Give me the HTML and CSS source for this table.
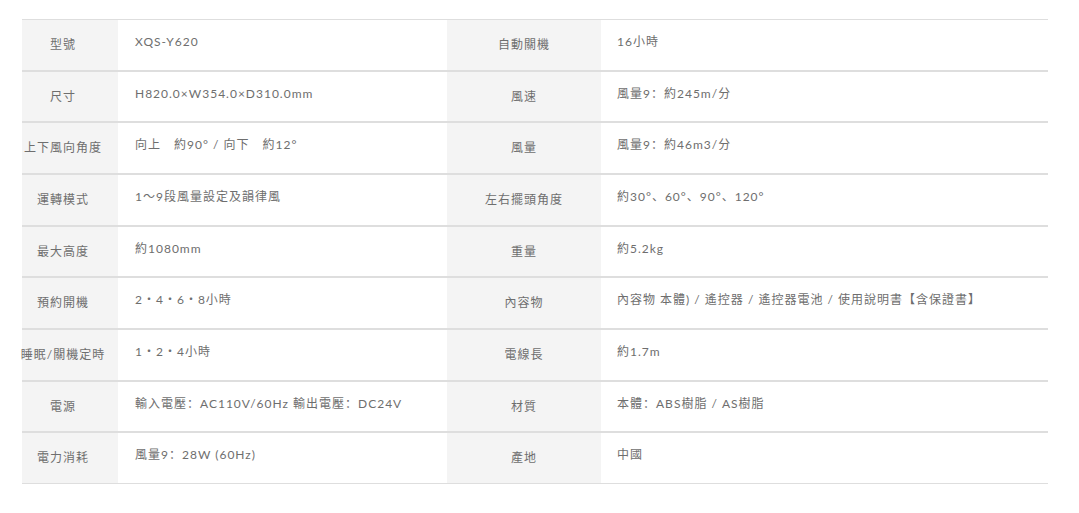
FILE: index.html
```html
<!DOCTYPE html>
<html lang="zh-Hant">
<head>
<meta charset="utf-8">
<title>規格</title>
<link rel="stylesheet" href="styles.css">
</head>
<body>
<div class="page">
  <div class="spec">
    <div class="lab lab1">型號</div><div class="val">XQS-Y620</div>
    <div class="lab">自動關機</div><div class="val val2">16小時</div>

    <div class="lab lab1">尺寸</div><div class="val">H820.0×W354.0×D310.0mm</div>
    <div class="lab">風速</div><div class="val val2">風量9：約245m/分</div>

    <div class="lab lab1">上下風向角度</div><div class="val">向上　約90° / 向下　約12°</div>
    <div class="lab">風量</div><div class="val val2">風量9：約46m3/分</div>

    <div class="lab lab1">運轉模式</div><div class="val">1～9段風量設定及韻律風</div>
    <div class="lab">左右擺頭角度</div><div class="val val2">約30°、60°、90°、120°</div>

    <div class="lab lab1">最大高度</div><div class="val">約1080mm</div>
    <div class="lab">重量</div><div class="val val2">約5.2kg</div>

    <div class="lab lab1">預約開機</div><div class="val">2・4・6・8小時</div>
    <div class="lab">內容物</div><div class="val val2">內容物 本體) / 遙控器 / 遙控器電池 / 使用說明書【含保證書】</div>

    <div class="lab lab1">睡眠/關機定時</div><div class="val">1・2・4小時</div>
    <div class="lab">電線長</div><div class="val val2">約1.7m</div>

    <div class="lab lab1">電源</div><div class="val">輸入電壓：AC110V/60Hz 輸出電壓：DC24V</div>
    <div class="lab">材質</div><div class="val val2">本體：ABS樹脂 / AS樹脂</div>

    <div class="lab lab1">電力消耗</div><div class="val">風量9：28W (60Hz)</div>
    <div class="lab">產地</div><div class="val val2">中國</div>
  </div>
</div>
</body>
</html>
```

FILE: styles.css
```css
html, body {
  margin: 0;
  padding: 0;
  background: #fff;
}

.page {
  padding: 19px 0 0 22px;
}

.spec {
  display: grid;
  grid-template-columns: 96px 329px 154px 447px;
  grid-auto-rows: 51.67px;
  width: 1026px;
  font-family: Lato, "Noto Sans CJK SC", sans-serif;
  font-size: 12px;
  letter-spacing: 1px;
  line-height: 1.4;
  color: #6e6e6e;
  font-feature-settings: "locl" 0;
}

.lab, .val {
  box-sizing: border-box;
  display: flex;
  align-items: center;
  border-top: 1px solid #dedede;
  border-bottom: 1px solid #dedede;
  white-space: nowrap;
}

.lab {
  background: #f4f4f4;
  justify-content: center;
  padding-top: 1px;
}

.lab1 {
  padding-right: 14px;
}

.val {
  padding: 0 0 5px 17px;
}

.val2 {
  padding-left: 16px;
}
```
